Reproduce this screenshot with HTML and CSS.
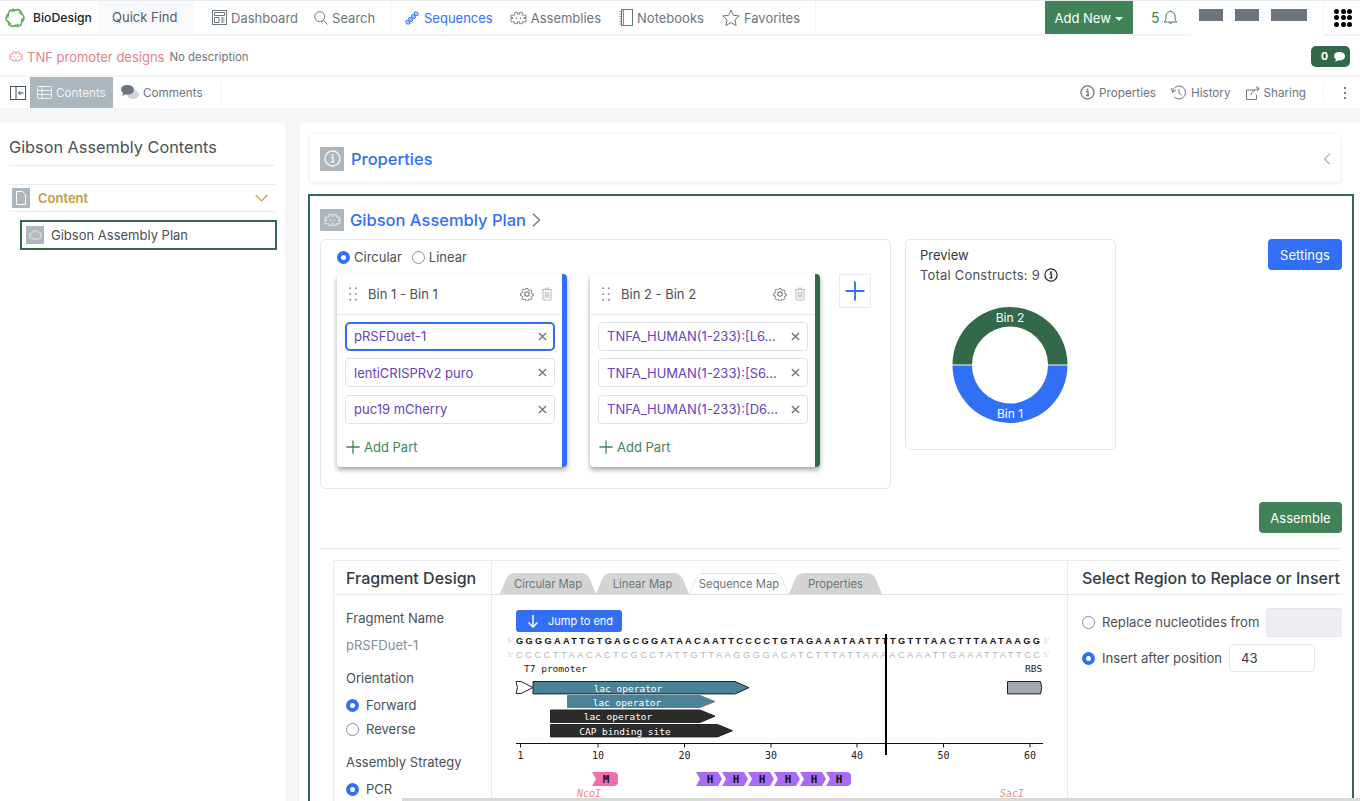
FILE: index.html
```html
<!DOCTYPE html>
<html lang="en">
<head>
  <meta charset="UTF-8">
  <meta name="viewport" content="width=device-width, initial-scale=1">
  <title>TNF promoter designs | BioDesign</title>
  <link rel="stylesheet" href="styles.css">
</head>
<body>

<svg class="sprites" width="0" height="0" aria-hidden="true">
  <symbol id="i-puzzle" viewBox="0 0 18 14">
    <path d="M5 1h3v2h2V1h3v3h4v2.500h-2v1h2V11h-4v2h-3v-2H8v2H5v-2H1V7.500h2v-1H1V4h4z" fill="none" stroke="currentColor" stroke-width=".9"/>
    <path d="M7 6v2.500M11 6v2.500" fill="none" stroke="currentColor" stroke-width=".8"/>
  </symbol>
  <symbol id="i-info" viewBox="0 0 16 16">
    <circle cx="8" cy="8" r="7" fill="none" stroke="currentColor" stroke-width="1.400"/>
    <circle cx="8" cy="4.800" r="1.100" fill="currentColor"/>
    <path d="M6.400 7.100h2.200v4.100h1.100M6.200 11.200h3.500" fill="none" stroke="currentColor" stroke-width="1.400"/>
  </symbol>
  <symbol id="i-gear" viewBox="0 0 16 16">
    <circle cx="8" cy="8" r="2.600" fill="none" stroke="currentColor" stroke-width="1.200"/>
    <path d="M6.800 1h2.400l.4 2 1.500.7 1.800-1 1.600 1.700-1.100 1.700.6 1.500 2 .4v2.200l-2 .5-.6 1.500 1.100 1.700-1.600 1.600-1.800-1-1.500.6-.4 2H6.800l-.4-2-1.500-.6-1.800 1-1.600-1.600 1.100-1.700-.6-1.500-2-.5V7l2-.4.6-1.500-1.100-1.700 1.600-1.700 1.800 1 1.500-.7z" transform="translate(.8 .8) scale(.9)" fill="none" stroke="currentColor" stroke-width="1.200" stroke-linejoin="round"/>
  </symbol>
  <symbol id="i-trash" viewBox="0 0 14 16">
    <path d="M1 3h12M5 3V1.200h4V3M2.300 3v11.300q0 .8.8.8h7.800q.8 0 .8-.8V3M5 5.500v7M7 5.500v7M9 5.500v7" fill="none" stroke="currentColor" stroke-width="1.100"/>
  </symbol>
  <symbol id="i-plus" viewBox="0 0 16 16">
    <path d="M8 1v14M1 8h14" fill="none" stroke="currentColor" stroke-width="1.500" stroke-linecap="round"/>
  </symbol>
  <symbol id="i-grip" viewBox="0 0 8 14">
    <g fill="currentColor">
      <circle cx="1.200" cy="1.200" r="1"/><circle cx="6.800" cy="1.200" r="1"/>
      <circle cx="1.200" cy="7" r="1"/><circle cx="6.800" cy="7" r="1"/>
      <circle cx="1.200" cy="12.800" r="1"/><circle cx="6.800" cy="12.800" r="1"/>
    </g>
  </symbol>
  <symbol id="i-close" viewBox="0 0 10 10">
    <path d="M1 1l8 8M9 1l-8 8" fill="none" stroke="currentColor" stroke-width="1.500"/>
  </symbol>
</svg>

<div class="page">

  <header class="topbar">
    <a class="brand">
      <svg class="brand-logo" width="20" height="20" viewBox="1 1 18 18" fill="none" stroke-linejoin="round">
        <path d="M16.060 13.500A4 4 0 0 1 10 17A4 4 0 0 1 3.940 13.500A4 4 0 0 1 3.940 6.500A4 4 0 0 1 10 3A4 4 0 0 1 16.060 6.500A4 4 0 0 1 16.060 13.500z" stroke="#62b34f" stroke-width="1.500"/>
        <circle cx="10" cy="10" r="6.500" stroke="#2f7d5b" stroke-width=".9" stroke-dasharray="3.400 3.400"/>
      </svg>
      BioDesign
    </a>
    <div class="quick-find">Quick Find</div>
    <nav class="nav-group nav-first">
      <a class="nav-item">
        <svg width="15" height="15" viewBox="0 0 15 15" fill="none" stroke="currentColor"><rect x=".5" y=".5" width="14" height="14"/><path d="M2.500 2.500h10v3h-10zM2.500 7.500h4.500v5h-4.500zM9 8h3.500M9 10h3.500M9 12h3.500"/></svg>
        Dashboard
      </a>
      <a class="nav-item">
        <svg width="14" height="14" viewBox="0 0 14 14" fill="none" stroke="currentColor"><circle cx="5.700" cy="5.700" r="5"/><path d="M9.300 9.300l4.200 4.200"/></svg>
        Search
      </a>
    </nav>
    <nav class="nav-group nav-second">
      <a class="nav-item active">
        <svg width="16" height="16" viewBox="-12 -12 24 24" fill="none" stroke="currentColor">
          <g transform="rotate(-45)">
            <path d="M-12 0q3-7 6 0t6 0 6 0 6 0M-12 0q3 7 6 0t6 0 6 0 6 0" stroke-width="1.300"/>
            <path d="M-10 -3v6M-8 -4v8M-4 -4v8M-2 -3v6M2 -3v6M4 -4v8M8 -4v8M10 -3v6" stroke-width="1"/>
          </g>
        </svg>
        Sequences
      </a>
      <a class="nav-item">
        <svg width="17" height="14"><use href="#i-puzzle"/></svg>
        Assemblies
      </a>
      <a class="nav-item">
        <svg width="14" height="17" viewBox="0 0 14 17" fill="none" stroke="currentColor"><rect x="2.500" y=".5" width="11" height="16"/><path d="M4.500 .5v16M.5 2.500h3M.5 5h3M.5 7.500h3M.5 10h3M.5 12.500h3M.5 15h3" stroke-width=".8"/></svg>
        Notebooks
      </a>
      <a class="nav-item">
        <svg width="18" height="17" viewBox="0 0 18 17" fill="none" stroke="currentColor" stroke-linejoin="round"><path d="M9 1l2.400 5.300 5.800.6-4.300 3.900 1.200 5.700L9 13.600l-5.100 2.900 1.200-5.700L.8 6.900l5.800-.6z"/></svg>
        Favorites
      </a>
    </nav>
    <button class="add-new">Add New <span class="caret"></span></button>
    <div class="bell">
      5
      <svg width="15" height="15" viewBox="0 0 15 15" fill="none" stroke="currentColor"><path d="M1 12q2-1 2-4V6a4.500 4.500 0 0 1 9 0v2q0 3 2 4zM6 12.500q1.500 3 3 0M7.500 1.500V.5"/></svg>
    </div>
    <div class="user-links">
      <span class="mask"></span>
      <span class="mask"></span>
      <span class="mask wide"></span>
    </div>
    <div class="apps">
      <span></span><span></span><span></span>
      <span></span><span></span><span></span>
      <span></span><span></span><span></span>
    </div>
  </header>

  <div class="titlebar">
    <svg class="title-icon" width="14" height="11"><use href="#i-puzzle"/></svg>
    <span class="doc-title">TNF promoter designs</span>
    <span class="doc-desc">No description</span>
    <span class="comment-badge">
      0
      <svg width="11" height="10" viewBox="0 0 11 10"><path d="M5.500 0C8.500 0 11 1.800 11 4.200S8.500 8.400 5.500 8.400q-.7 0-1.400-.2Q2.800 9.600.8 9.800 2 8.600 2 7.300 0 6.100 0 4.200 0 0 5.500 0z" fill="#fff"/></svg>
    </span>
  </div>

  <div class="tabbar">
    <svg class="collapse" width="16" height="14" viewBox="0 0 16 14" fill="none" stroke="#495057"><rect x=".5" y=".5" width="15" height="13"/><path d="M6 .5v13M13.500 7H8.500M10.500 5l-2 2 2 2"/></svg>
    <a class="view-tab selected">
      <svg width="15" height="13" viewBox="0 0 15 13" fill="none" stroke="currentColor"><rect x=".5" y=".5" width="14" height="12" rx="1"/><path d="M.5 4.500h14M.5 8.500h14M5 .5v12"/></svg>
      Contents
    </a>
    <a class="view-tab">
      <svg width="18" height="15" viewBox="0 0 18 15"><ellipse cx="12" cy="9.500" rx="6" ry="4.500" fill="#ced4da"/><path d="M6.500 0C10 0 13 2 13 4.800s-3 4.800-6.500 4.800q-1 0-2-.3Q3 10.500 1 10.800q1.200-1.200 1.300-2.600Q0 6.800 0 4.800 0 0 6.500 0z" fill="#6c757d"/></svg>
      Comments
    </a>
    <span class="tab-rule"></span>
    <div class="tab-actions">
      <a class="action">
        <svg width="15" height="15"><use href="#i-info"/></svg>
        Properties
      </a>
      <a class="action">
        <svg width="16" height="15" viewBox="0 0 16 15" fill="none" stroke="currentColor"><path d="M1.500 7.500a6.500 6.500 0 1 1 2 4.700M.5 3l1 4.300L5 5M8 4v4l2.500 2"/></svg>
        History
      </a>
      <a class="action">
        <svg width="14" height="14" viewBox="0 0 14 14" fill="none" stroke="currentColor"><path d="M9 4H.5v9.500h10V9M5 9q1-5 8-6.500M10 .5l3 2-2 3"/></svg>
        Sharing
      </a>
      <span class="tab-rule"></span>
      <span class="kebab"><i></i><i></i><i></i></span>
    </div>
  </div>

  <div class="workspace">
    <aside class="sidebar">
      <h2>Gibson Assembly Contents</h2>
      <div class="side-section">
        <span class="icon-box side-doc">
          <svg width="10" height="14" viewBox="0 0 10 14" fill="none" stroke="#fff"><path d="M.5.5h6l3 3v10h-9z"/></svg>
        </span>
        <span class="side-label">Content</span>
        <svg class="side-chevron" width="13" height="8" viewBox="0 0 13 8" fill="none" stroke="#c89b3c" stroke-width="1.200"><path d="M.7 1l5.800 6 5.800-6"/></svg>
      </div>
      <div class="side-item">
        <span class="icon-box small"><svg width="13" height="10"><use href="#i-puzzle"/></svg></span>
        Gibson Assembly Plan
      </div>
    </aside>

    <main class="content">
      <section class="properties-card">
        <span class="icon-box large"><svg width="17" height="17"><use href="#i-info"/></svg></span>
        <h3>Properties</h3>
        <svg class="back" width="8" height="12" viewBox="0 0 8 12" fill="none" stroke="#adb5bd" stroke-width="1.300"><path d="M7 .7L1.500 6 7 11.300"/></svg>
      </section>

      <section class="plan">
        <div class="plan-head">
          <span class="icon-box large"><svg width="17" height="14"><use href="#i-puzzle"/></svg></span>
          <h3>Gibson Assembly Plan</h3>
          <svg width="9" height="14" viewBox="0 0 9 14" fill="none" stroke="#6c757d" stroke-width="1.300"><path d="M1 .8L7.500 7 1 13.200"/></svg>
        </div>

        <div class="plan-top">
          <div class="bins-box">
            <div class="radio-row">
              <label class="radio"><input type="radio" name="shape" checked> Circular</label>
              <label class="radio"><input type="radio" name="shape"> Linear</label>
            </div>
            <div class="bins">
              <div class="bin bin-blue">
                <div class="bin-head">
                  <svg class="grip" width="8" height="14"><use href="#i-grip"/></svg>
                  <span class="bin-name">Bin 1 - Bin 1</span>
                  <svg class="gear" width="14" height="14"><use href="#i-gear"/></svg>
                  <svg class="trash" width="12" height="14"><use href="#i-trash"/></svg>
                </div>
                <div class="parts">
                  <div class="part focused"><span>pRSFDuet-1</span><svg width="9" height="9"><use href="#i-close"/></svg></div>
                  <div class="part"><span>lentiCRISPRv2 puro</span><svg width="9" height="9"><use href="#i-close"/></svg></div>
                  <div class="part"><span>puc19 mCherry</span><svg width="9" height="9"><use href="#i-close"/></svg></div>
                </div>
                <a class="add-part"><svg width="14" height="14"><use href="#i-plus"/></svg> Add Part</a>
              </div>
              <div class="bin bin-green">
                <div class="bin-head">
                  <svg class="grip" width="8" height="14"><use href="#i-grip"/></svg>
                  <span class="bin-name">Bin 2 - Bin 2</span>
                  <svg class="gear" width="14" height="14"><use href="#i-gear"/></svg>
                  <svg class="trash" width="12" height="14"><use href="#i-trash"/></svg>
                </div>
                <div class="parts">
                  <div class="part"><span>TNFA_HUMAN(1-233):[L6...</span><svg width="9" height="9"><use href="#i-close"/></svg></div>
                  <div class="part"><span>TNFA_HUMAN(1-233):[S6...</span><svg width="9" height="9"><use href="#i-close"/></svg></div>
                  <div class="part"><span>TNFA_HUMAN(1-233):[D6...</span><svg width="9" height="9"><use href="#i-close"/></svg></div>
                </div>
                <a class="add-part"><svg width="14" height="14"><use href="#i-plus"/></svg> Add Part</a>
              </div>
              <button class="add-bin"><svg width="20" height="20"><use href="#i-plus"/></svg></button>
            </div>
          </div>

          <div class="preview">
            <div class="preview-title">Preview</div>
            <div class="preview-total">Total Constructs: 9 <svg width="14" height="14"><use href="#i-info"/></svg></div>
            <svg class="donut" width="116" height="116" viewBox="0 0 116 116">
              <path d="M0.500 57.500a57.500 57.500 0 0 1 115 0H96a38 38 0 0 0-76 0z" fill="#33694a"/>
              <path d="M0.500 58.500a57.500 57.500 0 0 0 115 0H96a38 38 0 0 1-76 0z" fill="#316ff6"/>
              <text x="58" y="14.500">Bin 2</text>
              <text x="58" y="110.500">Bin 1</text>
            </svg>
          </div>

          <button class="btn btn-blue settings">Settings</button>
        </div>

        <div class="assemble-row">
          <button class="btn btn-green">Assemble</button>
        </div>

        <hr class="plan-rule">

        <div class="fragment">
          <div class="frag-left">
            <h4 class="frag-title">Fragment Design</h4>
            <div class="frag-fields">
              <div class="field-label">Fragment Name</div>
              <div class="field-value">pRSFDuet-1</div>
              <div class="field-label orient">Orientation</div>
              <label class="radio stack"><input type="radio" name="orient" checked> Forward</label>
              <label class="radio stack"><input type="radio" name="orient"> Reverse</label>
              <div class="field-label strategy">Assembly Strategy</div>
              <label class="radio stack"><input type="radio" name="strategy" checked> PCR</label>
            </div>
          </div>

          <div class="frag-map">
            <div class="map-tabs">
              <a class="map-tab">Circular Map</a>
              <a class="map-tab">Linear Map</a>
              <a class="map-tab current">Sequence Map</a>
              <a class="map-tab">Properties</a>
            </div>
            <button class="jump">
              <svg width="14" height="14" viewBox="0 0 14 14" fill="none" stroke="#fff" stroke-width="1.500"><path d="M7 1v12M2.500 8.500L7 13l4.500-4.500"/></svg>
              Jump to end
            </button>
            <svg class="seq" width="575" height="170" viewBox="0 0 575 170">
              <text class="end" x="15" y="9">5'</text>
              <text class="strand top" x="24" y="10" textLength="524">GGGGAATTGTGAGCGGATAACAATTCCCCTGTAGAAATAATTTTGTTTAACTTTAATAAGG</text>
              <text class="end" x="551" y="9">3'</text>
              <text class="end" x="15" y="23">3'</text>
              <text class="strand bottom" x="24" y="24" textLength="524">CCCCTTAACACTCGCCTATTGTTAAGGGGACATCTTTATTAAAACAAATTGAAATTATTCC</text>
              <text class="end" x="551" y="23">5'</text>

              <text class="mono" x="32" y="38">T7 promoter</text>
              <text class="mono" x="533" y="38">RBS</text>

              <path d="M24 47.500h5l12 6-12 6h-5q3-6 0-12z" fill="#fff" stroke="#222"/>
              <path class="feat teal" d="M41 47.500h202l14 6.200-14 6.200H41z"/>
              <text class="label" x="136" y="57.500" text-anchor="middle">lac operator</text>
              <path class="feat teal thin" d="M75.500 61.500h132.500l15 6-15 6H75.500z"/>
              <text class="label" x="135" y="71.800" text-anchor="middle">lac operator</text>
              <path class="feat dark" d="M58.500 76h149.500l15 6.200-15 6.200H58.500z"/>
              <text class="label" x="126" y="86.300" text-anchor="middle">lac operator</text>
              <path class="feat dark" d="M58.500 90.500h167l15 6.200-15 6.200H58.500z"/>
              <text class="label" x="133" y="100.600" text-anchor="middle">CAP binding site</text>
              <path class="feat grey" d="M515.500 47.500h33q2.500 6.200 0 12.400h-33z"/>

              <path class="axis" d="M24 109.500h527M28.500 109.500v4M106 109.500v4M192.500 109.500v4M279 109.500v4M365 109.500v4M451.500 109.500v4M538 109.500v4"/>
              <text class="tick" x="28.500" y="125" text-anchor="middle">1</text>
              <text class="tick" x="106" y="125" text-anchor="middle">10</text>
              <text class="tick" x="192.500" y="125" text-anchor="middle">20</text>
              <text class="tick" x="279" y="125" text-anchor="middle">30</text>
              <text class="tick" x="365" y="125" text-anchor="middle">40</text>
              <text class="tick" x="451.500" y="125" text-anchor="middle">50</text>
              <text class="tick" x="538" y="125" text-anchor="middle">60</text>

              <rect class="cursor" x="393" y="0" width="2" height="121"/>

              <path class="tag pink" d="M100 138h21q4 0 5 3v8q-1 3-5 3h-21l4-7z"/>
              <text class="tag-text" x="114" y="149" text-anchor="middle">M</text>
              <g>
                <path class="tag violet" d="M204 138h22l4 7-4 7h-22l4-7z"/>
                <text class="tag-text" x="218" y="149" text-anchor="middle">H</text>
                <path class="tag violet" d="M230 138h22l4 7-4 7h-22l4-7z"/>
                <text class="tag-text" x="244" y="149" text-anchor="middle">H</text>
                <path class="tag violet" d="M256 138h22l4 7-4 7h-22l4-7z"/>
                <text class="tag-text" x="270" y="149" text-anchor="middle">H</text>
                <path class="tag violet" d="M282 138h22l4 7-4 7h-22l4-7z"/>
                <text class="tag-text" x="296" y="149" text-anchor="middle">H</text>
                <path class="tag violet" d="M308 138h22l4 7-4 7h-22l4-7z"/>
                <text class="tag-text" x="322" y="149" text-anchor="middle">H</text>
                <path class="tag violet" d="M334 138h21q3 0 4 3v8q-1 3-4 3h-21l4-7z"/>
                <text class="tag-text" x="347" y="149" text-anchor="middle">H</text>
              </g>
              <text class="enzyme" x="85" y="163">NcoI</text>
              <text class="enzyme" x="508" y="163">SacI</text>
            </svg>
          </div>

          <div class="frag-right">
            <h4 class="frag-title">Select Region to Replace or Insert</h4>
            <div class="region-row first">
              <label class="radio"><input type="radio" name="region"> Replace nucleotides from</label>
              <div class="num-input empty"></div>
            </div>
            <div class="region-row">
              <label class="radio"><input type="radio" name="region" checked> Insert after position</label>
              <div class="num-input">43</div>
            </div>
          </div>
        </div>
      </section>
    </main>
  </div>

  <div class="h-scroll"></div>
</div>

</body>
</html>
```

FILE: styles.css
```css
* { box-sizing: border-box; }

html, body {
  margin: 0;
  height: 801px;
  overflow: hidden;
}
body {
  font-family: Inter, "Noto Sans", sans-serif;
  font-size: 13px;
  color: #495057;
  background: #fff;
}
h2, h3, h4 { margin: 0; font-weight: 500; }
button { font-family: inherit; cursor: pointer; }
svg { flex: none; }
.sprites { position: absolute; }

.page {
  position: relative;
  height: 801px;
  overflow: hidden;
}

/* top nav */
.topbar {
  display: flex;
  align-items: center;
  height: 36px;
  border-top: 1px solid #e9ecef;
  border-bottom: 2px solid #f1f3f5;
}
.topbar > * { flex: none; }
.brand {
  display: flex;
  align-items: center;
  gap: 8px;
  width: 98px;
  padding-left: 5px;
  font-size: 12.200px;
  font-weight: 500;
  color: #212529;
}
.quick-find {
  width: 96px;
  height: 33px;
  line-height: 33px;
  padding-left: 14px;
  background: #f8f9fa;
  color: #555b63;
}
.nav-group {
  display: flex;
  align-items: center;
  height: 33px;
}
.nav-first {
  width: 197px;
  padding-left: 18px;
  gap: 16px;
  border-right: 1px solid #f1f3f5;
}
.nav-second {
  width: 425px;
  padding-left: 13px;
  gap: 17px;
  border-right: 1px solid #f1f3f5;
}
.nav-item {
  display: flex;
  align-items: center;
  gap: 4px;
  color: #6c757d;
}
.nav-item.active { color: #316ff6; }
.nav-item:nth-child(3) { margin-left: 1px; }
.nav-item:nth-child(4) { margin-left: 1px; }
.add-new {
  margin-left: 229px;
  width: 88px;
  height: 33px;
  border: 0;
  background: #418358;
  color: #fff;
  font-size: 13px;
}
.caret {
  display: inline-block;
  vertical-align: 2px;
  margin-left: 1px;
  border: 4px solid transparent;
  border-top-color: #fff;
  border-bottom: 0;
}
.bell {
  display: flex;
  align-items: center;
  gap: 3px;
  margin-left: 18px;
  width: 39px;
  font-size: 14px;
  color: #418358;
}
.user-links {
  display: flex;
  gap: 12px;
  align-self: flex-start;
  height: 36px;
  margin-bottom: -3px;
  padding: 8px 16px 0 9px;
  background: #fff;
  position: relative;
}
.mask {
  width: 24px;
  height: 12px;
  background: #6c757d;
}
.mask.wide { width: 36px; }
.apps {
  display: grid;
  grid-template-columns: repeat(3, 5px);
  gap: 1.500px;
  height: 33px;
  align-content: center;
  padding-left: 10px;
  width: 37px;
  border-left: 1px solid #f1f3f5;
}
.apps span {
  width: 5px;
  height: 5px;
  border-radius: 50%;
  background: #000;
}

/* title row */
.titlebar {
  display: flex;
  align-items: center;
  height: 41px;
  padding: 2px 10px 0 9px;
  border-bottom: 2px solid #f1f3f5;
}
.title-icon { color: #e8808a; }
.doc-title {
  margin-left: 4px;
  font-size: 13px;
  color: #e8808a;
}
.doc-desc {
  margin-left: 5px;
  font-size: 11.400px;
  color: #6c757d;
}
.comment-badge {
  display: flex;
  align-items: center;
  gap: 6px;
  margin-left: auto;
  width: 39px;
  height: 21px;
  padding-left: 10px;
  border-radius: 5px;
  background: #33694a;
  color: #fff;
  font-size: 10.500px;
  font-weight: 700;
}

/* tab row */
.tabbar {
  display: flex;
  align-items: center;
  height: 31px;
  padding-left: 10px;
}
.collapse { margin-right: 4px; }
.view-tab {
  display: flex;
  align-items: center;
  gap: 4px;
  height: 31px;
  padding: 0 8px 0 7px;
  font-size: 11.700px;
  color: #6c757d;
}
.view-tab.selected {
  width: 83px;
  background: #adb5bd;
  color: #f1f3f5;
}
.view-tab + .view-tab { padding-left: 8px; }
.tab-rule {
  width: 1px;
  height: 20px;
  margin-left: 10px;
  background: #f1f3f5;
}
.tab-actions {
  display: flex;
  align-items: center;
  margin-left: auto;
}
.action {
  display: flex;
  align-items: center;
  gap: 4px;
  margin-right: 15px;
  font-size: 11.700px;
  color: #6c757d;
}
.tab-actions .tab-rule { margin-left: 2px; }
.kebab {
  display: flex;
  flex-direction: column;
  gap: 3px;
  width: 36px;
  padding-left: 20px;
}
.kebab i {
  width: 2px;
  height: 2px;
  border-radius: 50%;
  background: #495057;
}

/* main split */
.workspace {
  display: flex;
  gap: 15px;
  height: 693px;
  padding-top: 15px;
  background: #f5f6f8;
}
.sidebar {
  width: 285px;
  flex: none;
  padding: 1px 10px 0 9px;
  background: #fff;
}
.sidebar h2 {
  height: 42px;
  line-height: 46px;
  font-size: 16.300px;
  font-weight: 400;
  color: #495057;
  border-bottom: 1px solid #e9ecef;
}
.icon-box {
  display: inline-flex;
  align-items: center;
  justify-content: center;
  background: #adb5bd;
  color: #f1f3f5;
  flex: none;
}
.icon-box.large { width: 24px; height: 24px; }
.icon-box.small { width: 18px; height: 18px; }
.side-section {
  display: flex;
  align-items: center;
  height: 28px;
  margin-top: 18px;
  padding: 0 7px 0 3px;
  border-top: 1px solid #e9ecef;
  border-bottom: 1px solid #e9ecef;
}
.side-doc { width: 18px; height: 20px; }
.side-label {
  margin-left: 8px;
  font-weight: 600;
  color: #c89b3c;
}
.side-chevron { margin-left: auto; }
.side-item {
  display: flex;
  align-items: center;
  gap: 7px;
  height: 30px;
  margin: 8px -2px 0 11px;
  padding-left: 4px;
  border: 2px solid #33694a;
  color: #495057;
}

.content {
  flex: 1;
  min-width: 0;
  padding-top: 11px;
  background: #fff;
}
.properties-card {
  display: flex;
  align-items: center;
  gap: 7px;
  height: 48px;
  margin: 0 20px 12px 10px;
  padding: 1px 9px 0 10px;
  box-shadow: 0 1px 4px rgba(0,0,0,0.1);
}
.properties-card h3 {
  font-size: 16.500px;
  color: #316ff6;
}
.back { margin-left: auto; }

.plan {
  margin: 0 6px 0 8px;
  padding: 13px 10px 0;
  border: 2px solid #33694a;
  border-bottom: 0;
}
.plan-head {
  display: flex;
  align-items: center;
  gap: 6px;
  height: 22px;
  margin-bottom: 8px;
}
.plan-head .icon-box { width: 24px; height: 22px; }
.plan-head h3 {
  font-size: 16.500px;
  color: #316ff6;
}

.plan-top { display: flex; align-items: flex-start; }
.bins-box {
  width: 571px;
  height: 250px;
  padding: 7px 0 0 16px;
  border: 1px solid #e5e7eb;
  border-radius: 6px;
}
.radio-row {
  display: flex;
  gap: 10px;
  height: 20px;
  margin-bottom: 7px;
}
.radio {
  display: inline-flex;
  align-items: center;
  gap: 4px;
  color: #495057;
}
.radio input {
  appearance: none;
  width: 13px;
  height: 13px;
  margin: 0;
  border: 1px solid #868e96;
  border-radius: 50%;
  flex: none;
}
.radio input:checked { border: 4px solid #316ff6; }

.bins { display: flex; align-items: flex-start; }
.bin {
  width: 230px;
  height: 193px;
  margin-right: 23px;
  border-right: 5px solid;
  border-radius: 4px;
  background: #fff;
  box-shadow: 0 3px 5px rgba(0,0,0,0.35);
}
.bin-blue { border-right-color: #316ff6; }
.bin-green { border-right-color: #33694a; margin-right: 19px; }
.bin-head {
  display: flex;
  align-items: center;
  height: 41px;
  padding: 0 9px 0 12px;
  border-bottom: 1px solid #e9ecef;
}
.grip { color: #868e96; }
.bin-name { margin-left: 11px; }
.gear { margin-left: auto; color: #6c757d; }
.trash { margin-left: 7px; color: #adb5bd; }
.parts {
  display: flex;
  flex-direction: column;
  gap: 7.500px;
  padding: 6.500px 7px 0 8px;
}
.part {
  display: flex;
  align-items: center;
  justify-content: space-between;
  height: 29px;
  padding: 0 7px 0 8px;
  border: 1px solid #dee2e6;
  border-radius: 4px;
  color: #6741c0;
}
.part svg { color: #6c757d; }
.part.focused {
  border: 2px solid #316ff6;
  padding: 0 6px 0 7px;
  border-radius: 5px;
}
.add-part {
  display: flex;
  align-items: center;
  gap: 4px;
  margin: 15.500px 0 0 9px;
  color: #418358;
}
.add-bin {
  width: 32px;
  height: 34px;
  padding: 0;
  border: 1px solid #e9ecef;
  background: #fff;
  color: #316ff6;
  display: flex;
  align-items: center;
  justify-content: center;
}

.preview {
  width: 211px;
  height: 211px;
  margin-left: 14px;
  padding: 7px 0 0 14px;
  border: 1px solid #e5e7eb;
  border-radius: 5px;
}
.preview-title { line-height: 16px; color: #343a40; }
.preview-total {
  display: flex;
  align-items: center;
  gap: 4px;
  margin-top: 4px;
  line-height: 16px;
  letter-spacing: 0.2px;
  color: #495057;
}
.preview-total svg { color: #212529; }
.donut { display: block; margin: 24px 0 0 32px; }
.donut text {
  fill: #fff;
  font-size: 12px;
  text-anchor: middle;
}

.btn {
  height: 31px;
  border: 0;
  border-radius: 4px;
  color: #fff;
  font-size: 13px;
}
.btn-blue { background: #316ff6; }
.btn-green { background: #418358; width: 83px; }
.settings { width: 74px; margin-left: auto; }
.assemble-row {
  display: flex;
  justify-content: flex-end;
  margin-top: 13px;
}
.plan-rule {
  margin: 15px 0 11px;
  border: 0;
  border-top: 1px solid #e9ecef;
}

/* fragment design panel */
.fragment {
  display: grid;
  grid-template-columns: 158px 576px 1fr;
  margin-left: 13px;
  border-top: 1px solid #e9ecef;
  border-left: 1px solid #e9ecef;
  overflow: hidden;
}
.frag-left, .frag-map { border-right: 1px solid #e9ecef; }
.frag-title {
  height: 34px;
  line-height: 34px;
  padding-left: 12px;
  font-size: 16px;
  color: #343a40;
  white-space: nowrap;
  border-bottom: 1px solid #e9ecef;
}
.frag-right .frag-title { padding-left: 14px; }
.frag-fields { padding: 14px 0 0 12px; }
.field-label { line-height: 18px; color: #495057; }
.field-value { margin-top: 9px; line-height: 18px; color: #868e96; }
.orient { margin-top: 15px; margin-bottom: 9px; }
.strategy { margin-top: 15px; margin-bottom: 9px; }
.radio.stack { display: flex; height: 18px; margin-bottom: 6px; gap: 7px; }

.map-tabs {
  display: flex;
  height: 34px;
  padding: 12px 0 0 8px;
  border-bottom: 1px solid #dcdfe3;
}
.map-tab {
  position: relative;
  z-index: 0;
  display: flex;
  align-items: center;
  justify-content: center;
  height: 21px;
  font-size: 11.300px;
  color: #6c757d;
  width: 96px;
}
.map-tab:nth-child(2) { width: 93px; }
.map-tab:nth-child(3) { width: 100px; z-index: 1; }
.map-tab:nth-child(4) { width: 93px; }
.map-tab::before, .map-tab::after {
  content: "";
  position: absolute;
  z-index: -1;
  top: 0;
  bottom: 0;
  width: 55%;
  background: #d4d4d4;
}
.map-tab::before {
  left: 0;
  transform-origin: bottom left;
  transform: skewX(-22deg);
  border-radius: 6px 0 0 0;
}
.map-tab::after {
  right: 0;
  transform-origin: bottom right;
  transform: skewX(22deg);
  border-radius: 0 6px 0 0;
}
.map-tab.current::before, .map-tab.current::after {
  background: #fff;
  border-top: 1px solid #dcdfe3;
}
.map-tab.current::before { border-left: 1px solid #dcdfe3; }
.map-tab.current::after { border-right: 1px solid #dcdfe3; }

.jump {
  display: flex;
  align-items: center;
  gap: 8px;
  width: 106px;
  height: 22px;
  margin: 15px 0 2px 24px;
  padding: 0 0 0 10px;
  border: 0;
  border-radius: 3px;
  background: #316ff6;
  color: #fff;
  font-size: 11px;
}
.seq { display: block; }
.seq text { font-family: "DejaVu Sans", sans-serif; }
.seq .strand {
  font-family: "Liberation Sans", sans-serif;
  font-size: 9.200px;
}
.seq .top { fill: #111; font-weight: 700; }
.seq .bottom { fill: #b0b5ba; }
.seq .end { font-size: 7px; fill: #ced4da; }
.seq .mono, .seq .label, .seq .tick, .seq .tag-text, .seq .enzyme {
  font-family: "DejaVu Sans Mono", monospace;
}
.seq .mono { font-size: 9.500px; fill: #222; }
.seq .label { font-size: 9.500px; fill: #fff; }
.seq .tick { font-size: 10px; fill: #222; }
.seq .tag-text { font-size: 11px; font-weight: 700; fill: #111; }
.seq .enzyme { font-size: 10px; font-style: italic; fill: #f08a80; }
.feat { stroke: #222; stroke-width: 1; }
.teal { fill: #4a8299; }
.thin { stroke: #777; }
.dark { fill: #2b2b2b; }
.grey { fill: #a4a9b0; }
.axis { fill: none; stroke: #111; stroke-width: 1; }
.cursor { fill: #000; }
.pink { fill: #f06db0; }
.violet { fill: #a96bf5; }

.region-row {
  display: flex;
  align-items: center;
  gap: 7px;
  height: 28px;
  margin-top: 8px;
  padding-left: 14px;
  font-size: 13.100px;
  white-space: nowrap;
}
.region-row.first { margin-top: 13px; }
.region-row .radio { gap: 7px; }
.num-input {
  flex: none;
  width: 86px;
  height: 28px;
  line-height: 26px;
  padding-left: 11px;
  border: 1px solid #e5e7eb;
  border-radius: 3px;
  color: #343a40;
}
.num-input.empty { background: #eceef1; height: 29px; }

.h-scroll {
  position: absolute;
  left: 402px;
  right: 0;
  bottom: 0;
  height: 3px;
  background: #d9d9d9;
}
```
